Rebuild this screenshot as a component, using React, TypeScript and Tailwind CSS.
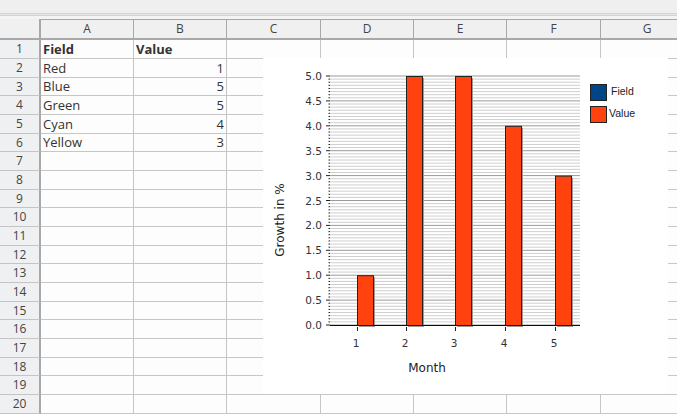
import React from 'react';

const COLS = [
    { name: 'A', w: 'w-[93px]' },
    { name: 'B', w: 'w-[93px]' },
    { name: 'C', w: 'w-[94px]' },
    { name: 'D', w: 'w-[93px]' },
    { name: 'E', w: 'w-[93px]' },
    { name: 'F', w: 'w-[94px]' },
    { name: 'G', w: 'w-[93px]' },
];

// rows are ~18.7px tall, so alternate 19/19/18
const ROW_H = [
    'h-[19px]', 'h-[19px]', 'h-[18px]', 'h-[19px]', 'h-[19px]', 'h-[18px]', 'h-[19px]',
    'h-[19px]', 'h-[18px]', 'h-[19px]', 'h-[19px]', 'h-[18px]', 'h-[19px]', 'h-[19px]',
    'h-[18px]', 'h-[19px]', 'h-[19px]', 'h-[18px]', 'h-[19px]', 'h-[19px]',
];

const DATA: [string, number][] = [
    ['Red', 1],
    ['Blue', 5],
    ['Green', 5],
    ['Cyan', 4],
    ['Yellow', 3],
];

const Chart = () => {
    const y0 = 325;
    const unit = 49.8;
    const left = 330;
    const right = 580;
    const ticks = [357, 406, 455, 505, 555];

    const minor: number[] = [];
    for (let i = 0; i <= 80; i++) minor.push(i);

    return (
        <svg
            className="absolute left-[263px] top-[58px] bg-white font-['DejaVu_Sans','Noto_Sans',sans-serif]"
            width={405}
            height={336}
            viewBox="263 58 405 336"
        >
            {/* grid */}
            {minor.map((i) => {
                const y = y0 - (i / 16) * unit;
                const major = i % 8 === 0;
                return (
                    <line
                        key={i}
                        x1={left}
                        x2={right}
                        y1={y}
                        y2={y}
                        stroke={major ? '#9a9a9a' : '#cfcfcf'}
                        strokeWidth={1}
                    />
                );
            })}
            {/* y axis ticks */}
            {minor.map((i) => {
                const y = y0 - (i / 16) * unit;
                const major = i % 8 === 0;
                return (
                    <line
                        key={'t' + i}
                        x1={major ? 326 : 328.5}
                        x2={330}
                        y1={y}
                        y2={y}
                        stroke="#222"
                        strokeWidth={1}
                    />
                );
            })}
            {[0, 0.5, 1, 1.5, 2, 2.5, 3, 3.5, 4, 4.5, 5].map((v) => (
                <text key={v} x={322} y={y0 - v * unit + 4} textAnchor="end" fontSize={10.5} fill="#333">
                    {v.toFixed(1)}
                </text>
            ))}

            {/* bars */}
            {DATA.map(([, v], i) => {
                const h = v * unit;
                return (
                    <g key={i}>
                        <rect x={ticks[i] + 2} y={y0 - h + 2} width={16} height={h} fill="#9a9a9a" />
                        <rect x={ticks[i] + 0.5} y={y0 - h + 0.5} width={16} height={h} fill="#ff420e" stroke="#222" strokeWidth={1} />
                    </g>
                );
            })}

            {/* x axis */}
            <line x1={left} x2={right} y1={y0 + 0.5} y2={y0 + 0.5} stroke="#000080" strokeWidth={1.2} />
            {ticks.map((x, i) => (
                <g key={x}>
                    <line x1={x + 0.5} x2={x + 0.5} y1={y0 + 2} y2={y0 + 6} stroke="#222" strokeWidth={1} />
                    <text x={x - 1} y={347} textAnchor="middle" fontSize={10.5} fill="#333">
                        {i + 1}
                    </text>
                </g>
            ))}

            <text x={427} y={372} textAnchor="middle" fontSize={12} fill="#222">
                Month
            </text>
            <text x={284} y={220} textAnchor="middle" fontSize={12} fill="#222" transform="rotate(-90 284 220)">
                Growth in %
            </text>

            {/* legend */}
            <rect x={590.5} y={84.5} width={16} height={16} fill="#004586" stroke="#222" strokeWidth={1} />
            <text x={611} y={95} fontSize={10.5} fill="#222" className="font-['Liberation_Sans',Arial,sans-serif]">
                Field
            </text>
            <rect x={590.5} y={106.5} width={16} height={16} fill="#ff420e" stroke="#222" strokeWidth={1} />
            <text x={609} y={117} fontSize={10.5} fill="#222" className="font-['Liberation_Sans',Arial,sans-serif]">
                Value
            </text>
        </svg>
    );
};

export default function App() {
    return (
        <div className="relative w-[677px] h-[414px] overflow-hidden bg-[#efefef] text-[#333] font-['Open_Sans','Noto_Sans',sans-serif]">
            {/* toolbar remnant */}
            <div className="h-[13px] bg-[#efefef]" />
            <div className="h-[3px] border-t border-b border-[#d4d4d4] bg-[#e6e6e6]" />
            <div className="h-[3px] bg-[#f4f4f4]" />

            {/* column headers */}
            <div className="flex h-[21px]">
                <div className="w-[41px] shrink-0 bg-[#f0f0f0] border-r-2 border-b-2 border-[#a8a8a8]" />
                {COLS.map((c) => (
                    <div
                        key={c.name}
                        className={`${c.w} shrink-0 flex items-center justify-center bg-[#f0f0f0] border-t border-r border-b-2 border-[#a8a8a8] text-[12px] text-[#444]`}
                    >
                        {c.name}
                    </div>
                ))}
            </div>

            {/* rows */}
            {ROW_H.map((h, r) => {
                const row = r + 1;
                return (
                    <div key={row} className={`flex ${h}`}>
                        <div className="w-[41px] shrink-0 flex items-center justify-center bg-[#eff0f1] border-r-2 border-b border-[#a8a8a8] border-b-[#c4c4c4] text-[12px] text-[#444]">
                            {row}
                        </div>
                        {COLS.map((c, ci) => {
                            let content: React.ReactNode = null;
                            let align = 'justify-start';
                            if (row === 1 && ci === 0) content = <span className="font-bold">Field</span>;
                            if (row === 1 && ci === 1) content = <span className="font-bold">Value</span>;
                            if (row >= 2 && row <= 6 && ci === 0) content = DATA[row - 2][0];
                            if (row >= 2 && row <= 6 && ci === 1) {
                                content = DATA[row - 2][1];
                                align = 'justify-end';
                            }
                            return (
                                <div
                                    key={c.name}
                                    className={`${c.w} shrink-0 flex items-center ${align} px-[2px] bg-[#fdfdfd] border-r border-b border-[#c6c6c6] text-[13px] leading-none text-[#333]`}
                                >
                                    {content}
                                </div>
                            );
                        })}
                    </div>
                );
            })}

            <Chart />
        </div>
    );
}
